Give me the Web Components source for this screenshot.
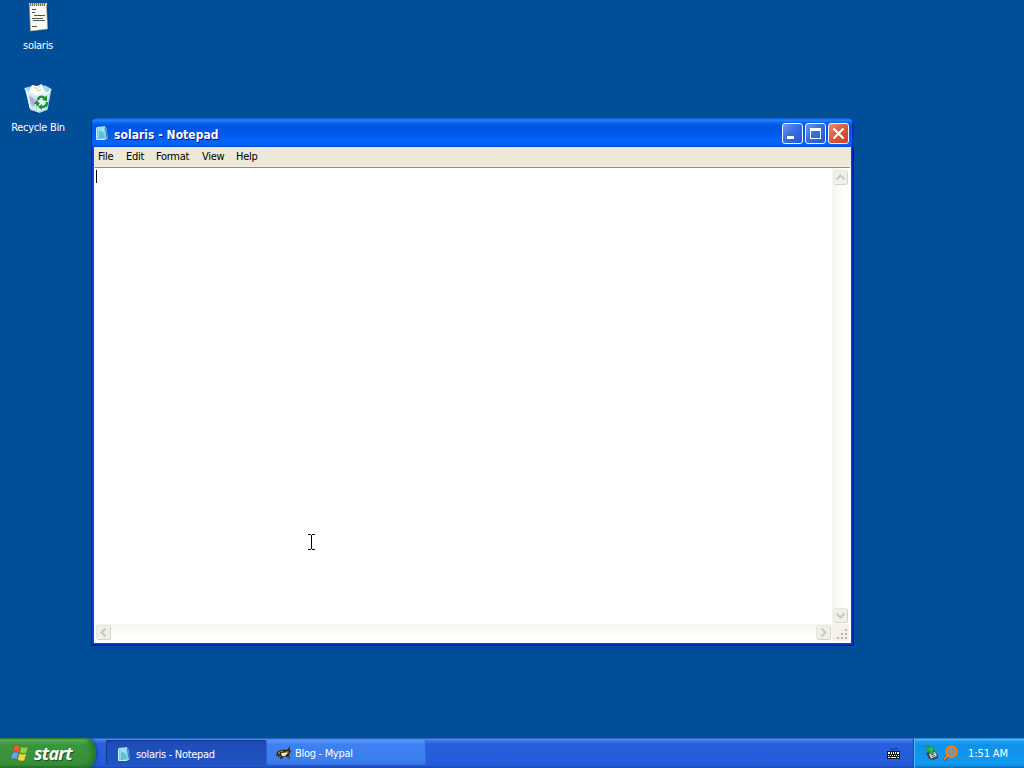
<!DOCTYPE html>
<html lang="en">
<head>
<meta charset="utf-8">
<title>solaris - Notepad</title>
<style>
  html, body {
    margin: 0;
    height: 100%;
    overflow: hidden;
  }
  body {
    background: #004e98;
    font-family: "DejaVu Sans Condensed", "DejaVu Sans", sans-serif;
    font-size: 11px;
    letter-spacing: -0.3px;
    color: #fff;
  }
</style>
</head>
<body>
<xp-desktop>
  <desktop-icon slot="icons" icon="textfile">solaris</desktop-icon>
  <desktop-icon slot="icons" icon="bin">Recycle Bin</desktop-icon>
  <xp-window slot="windows" caption="solaris - Notepad">
    <menu-bar slot="menu">
      <span style="width:28px">File</span><span style="width:30px">Edit</span><span style="width:46px">Format</span><span style="width:34px">View</span><span>Help</span>
    </menu-bar>
    <text-area></text-area>
  </xp-window>
  <xp-taskbar slot="taskbar">
    <task-button icon="notepad" active>solaris - Notepad</task-button>
    <task-button icon="mypal">Blog - Mypal</task-button>
    <span slot="clock">1:51 AM</span>
  </xp-taskbar>
</xp-desktop>

<script>
const icons = {
  textfile: `<svg width="32" height="32" viewBox="0 0 32 32">
    <path d="M24 6l3 2v22l-17 2-2-2z" fill="#002f62" opacity=".5"/>
    <path d="M7.500 5h17l1 24-17 2z" fill="#fbfbf5" stroke="#b5b4a8" stroke-width=".6"/>
    <path d="M7 3h18v2.500H7z" fill="#d9d29a"/>
    <path d="M8.500 3v3m2-3v3m2-3v3m2-3v3m2-3v3m2-3v3m2-3v3m2-3v3" stroke="#686546" stroke-width=".9"/>
    <path d="M10 9.500h4M10 12.500h3M12 15.500h11M10 18.500h11M11 20.500h12M10 26.500h5" stroke="#55564f" stroke-width="1"/>
    </svg>`,
  bin: `<svg width="32" height="32" viewBox="0 0 32 32">
    <path d="M29 8l-5 21-8 3-7-2z" fill="#00366f" opacity=".6"/>
    <path d="M2.500 6l6-1.500 15-1 6 3.500-4 21-8 3-9-3z" fill="#a9d5f2"/>
    <path d="M4 9l11 4-1 16-6-2z" fill="#c8e5f9"/><path d="M15 13l13-4-4 18-9 3z" fill="#e0f0fb"/>
    <path d="M8 6l2-3 5 1 5-2 2 6 2 2-9 3-8-3z" fill="#fff"/>
    <path d="M12 5l3 2 3-3m-4 5l5-1" fill="none" stroke="#d6ce8d"/>
    <path d="M3 6l3 5 9 3 11-3 3-4M5 10l3 16" fill="none" stroke="#f2faff" stroke-width="1.1"/>
    <path d="M7 14l4 2 3 3-2 6-3-3z" fill="#b2aed5"/>
    <g fill="none" stroke="#19952c" stroke-width="2.500"><path d="M16 18q1-4 5-3l3 2"/><path d="M25 20q0 5-5 5"/><path d="M16 24l-1-3"/></g>
    <path d="M25 13v6l-5-1zM20 22v6l-4-3zM12 22l3-4 3 4z" fill="#19952c"/>
    </svg>`,
  notepad: `<svg width="16" height="16" viewBox="0 0 16 16">
    <path d="M11 4l4.500 9-3.500 1-2-1z" fill="#15468c"/>
    <path d="M2 1.500l9-1 1.500 2 1.500 10-3 1.500-9-.5z" fill="#7bc7e3"/>
    <path d="M4 2.500l6-.5 1.500 11-7-.5z" fill="#9be3f2"/>
    <path d="M5 4l5 3 1 5-6 1z" fill="#4fa9cb" opacity=".7"/>
    <path d="M2.500 2v11.500h8M3 1.500l8-.7" fill="none" stroke="#c7edf5"/>
    <path d="M11.500 2l1.500 10" stroke="#3a82aa"/>
    </svg>`,
  mypal: `<svg width="16" height="16" viewBox="0 0 16 16">
    <path d="M1 7l3-2 3-.5 3 .5 2-1 2-3-.5 4 1.500 1-1 2-1 2 1 4-3-1-1-2-3 1-1 2H4l1-3-4 2 2-3-3 1z" fill="#28231d"/>
    <path d="M3 6l3-.5 2 .5-2 1zM9 7l3-1 1 1-2 2z" fill="#cf8736"/>
    <path d="M5 8l5-.5 1.500 1L9 11H6z" fill="#f8eabd"/>
    <path d="M2 8h2M8 9.500h2M12 12v1" stroke="#eed29c"/>
    <path d="M2 6l2-1M3 12l2-1" stroke="#a85b20"/>
    </svg>`,
  keyboard: `<svg width="14" height="14" viewBox="0 0 14 14">
    <path d="M3 2.500h1l1 1h2l1-1h2l1 1" fill="none" stroke="#16255e" stroke-width=".9"/>
    <path d="M0 5h13v8H0z" fill="#151515"/>
    <g fill="#fff"><path d="M1 6h2v2H1zM4 6h1v2H4zM6 6h1v2H6zM8 6h1v2H8zM10 6h2v2h-2zM1 9h1v1H1zM3 9h1v1H3zM5 9h1v1H5zM7 9h1v1H7zM9 9h1v1H9zM11 9h1v1h-1zM1 11h2v1H1zM4 11h5v1H4zM10 11h2v1h-2z"/></g>
    </svg>`,
  usb: `<svg width="16" height="16" viewBox="0 0 16 16">
    <path d="M2 8l3 6 4 1 5-2v-3l-4-4z" fill="#354750"/><path d="M5 9l6-2 2 4-6 2.500z" fill="#d2dadd"/>
    <path d="M7 10l3-1M8 11.500l3-1" stroke="#506672"/>
    <path d="M1 1l4 1.500L7 1l4 4-2 1v3L5 8l1-2-3-1z" fill="#2dbb43" stroke="#127c30" stroke-width=".6"/>
    </svg>`,
  search: `<svg width="17" height="17" viewBox="0 0 17 17">
    <path d="M6 10l-4 5" stroke="#69423a" stroke-width="3.300"/><path d="M6 10l-4 4.500" stroke="#ef8428" stroke-width="2"/>
    <circle cx="9.500" cy="6.500" r="5" fill="#559bc9" stroke="#e98122" stroke-width="2.600"/>
    <circle cx="9.500" cy="6.500" r="1.400" fill="#e98129"/>
    </svg>`,
  flag: `<svg width="20" height="20" viewBox="0 0 20 20">
    <g stroke="#24572a" stroke-width=".3">
    <path d="M4 3q3-2 6.500 0L9 9.500q-3-2-6.500 0z" fill="#f25a28"/>
    <path d="M11 3.500q3 2 7 0L16.500 10q-3 1.500-7-.5z" fill="#8bd34a"/>
    <path d="M2.300 10q3-2 6.500 0L7 16.500q-3-2-6.500 0z" fill="#6c9df4"/>
    <path d="M9.300 10.200q3 2 7 .3L14.500 17.500q-3.500 1.500-7-.7z" fill="#fbd33c"/></g>
    </svg>`
};

function render(element, html) {
  const template = document.createElement('template');
  template.innerHTML = html;
  const root = element.attachShadow({ mode: 'open' });
  root.appendChild(template.content.cloneNode(true));
  return root;
}

class XpDesktop extends HTMLElement {
  constructor() {
    super();
    render(this, `
      <style>
        :host { display: flex; flex-direction: column; height: 100vh; position: relative; background: #004e98; }
        .icons { flex: 1; display: flex; flex-direction: column; width: 76px; gap: 30px; }
        .pointer { position: absolute; left: 307px; top: 534px; }
      </style>
      <div class="icons"><slot name="icons"></slot></div>
      <slot name="windows"></slot>
      <slot name="taskbar"></slot>
      <svg class="pointer" width="9" height="16" shape-rendering="crispEdges"><path d="M1 .5h3m1 0h3M4.500 1v14M1 15.500h3m1 0h3" stroke="#000" fill="none"/></svg>
    `);
  }
}

class DesktopIcon extends HTMLElement {
  constructor() {
    super();
    render(this, `
      <style>
        :host { display: flex; flex-direction: column; align-items: center; height: 52px; }
        svg { display: block; flex: none; }
        .label { margin-top: 7px; line-height: 14px; white-space: nowrap; }
      </style>
      ${icons[this.getAttribute('icon')]}
      <div class="label"><slot></slot></div>
    `);
  }
}

class CaptionButton extends HTMLElement {
  constructor() {
    super();
    const marks = {
      min: '<path d="M5 13h7v3H5z" fill="#fff"/>',
      max: '<path d="M5 5h11v11H5zM6 8v7h9V8z" fill="#fff" fill-rule="evenodd"/>',
      close: '<path d="M5.500 5.500l10 10m0-10l-10 10" stroke="#fff" stroke-width="2.200"/>'
    };
    render(this, `
      <style>
        :host { display: block; box-sizing: border-box; width: 21px; height: 21px; border: 1px solid #eef4ff; border-radius: 3px;
          background: linear-gradient(135deg, #6c98ef, #3a6de4 45%, #2456d8); }
        :host([kind=close]) { background: linear-gradient(135deg, #ea9276, #dd5a38 45%, #c94421); }
        svg { display: block; margin: -1px; }
      </style>
      <svg width="21" height="21" viewBox="0 0 21 21">${marks[this.getAttribute('kind')]}</svg>
    `);
  }
}

class XpWindow extends HTMLElement {
  constructor() {
    super();
    const root = render(this, `
      <style>
        :host { position: absolute; left: 91px; top: 118px; width: 763px; height: 528px; box-sizing: border-box;
          display: flex; flex-direction: column; padding: 0 3px 3px; background: #0a3fe6; border-radius: 7px 7px 0 0; overflow: hidden;
          box-shadow: inset 1px 0 #0019cf, inset -1px -1px #001aa5, inset -2px -2px #0026c4; }
        .title { height: 29px; flex: none; box-sizing: border-box; margin: 0 -3px; padding: 2px 5px 0 3px; display: flex; align-items: center;
          background: linear-gradient(#0058cf 0, #2b86fb 7%, #0f6ff2 14%, #0058e8 24%, #0055e6 40%, #005bf2 60%, #0265fc 80%, #0262f6 90%, #004bdc 100%);
          box-shadow: inset 1px 0 #0019cf, inset -2px 0 #0031c8; }
        .caption { flex: 1; margin-left: 4px; font-size: 12px; font-weight: bold; letter-spacing: 0.03px; text-shadow: 1px 1px #0f1089; padding-top: 2px; }
        .buttons { display: flex; gap: 2px; }
        .body { flex: 1; display: flex; flex-direction: column; min-height: 0; background: #fff; }
      </style>
      <div class="title">
        ${icons.notepad}
        <div class="caption"></div>
        <div class="buttons"><caption-button kind="min"></caption-button><caption-button kind="max"></caption-button><caption-button kind="close"></caption-button></div>
      </div>
      <div class="body"><slot name="menu"></slot><slot></slot></div>
    `);
    root.querySelector('.caption').textContent = this.getAttribute('caption');
  }
}

class MenuBar extends HTMLElement {
  constructor() {
    super();
    render(this, `
      <style>
        :host { display: flex; flex: none; box-sizing: border-box; height: 20px; padding: 3px 4px 0; line-height: 14px; color: #000; background: #ece9d8; border-bottom: 1px solid #f3f0e5; }
      </style>
      <slot></slot>
    `);
  }
}

class ScrollBar extends HTMLElement {
  constructor() {
    super();
    const arrow = turn => `<svg width="17" height="17" viewBox="0 0 17 17"><rect x="1.500" y="1.500" width="14" height="14" rx="2" fill="#f0efe9" stroke="#e6e5de"/><path d="M3 15.500h11.500l1-1V3" fill="none" stroke="#d4d3cb"/><path d="M4.500 10.500l4-4 4 4" transform="rotate(${turn} 8.500 8.500)" fill="none" stroke="#c9c8bf" stroke-width="2"/></svg>`;
    const vertical = this.hasAttribute('vertical');
    render(this, `
      <style>
        :host { display: flex; justify-content: space-between; background: linear-gradient(#f5f4ef, #fefefb 70%); }
        :host([vertical]) { flex-direction: column; padding-top: 1px; background: linear-gradient(90deg, #f5f4ef, #fefefb 70%); }
        svg { display: block; flex: none; }
      </style>
      ${arrow(vertical ? 0 : -90)}${arrow(vertical ? 180 : 90)}
    `);
  }
}

class TextArea extends HTMLElement {
  constructor() {
    super();
    render(this, `
      <style>
        :host { display: grid; grid-template: 1fr 17px / 1fr 17px; flex: 1; box-sizing: border-box; border: 1px solid #fff; border-width: 1px 2px 2px 1px; border-top-color: #8d8c84; }
        .paper { background: #fff; padding: 2px 1px; }
        .caret { width: 1px; height: 13px; background: #000; }
        .grip { background: #f3f1e8; }
        svg { display: block; }
      </style>
      <div class="paper"><div class="caret"></div></div>
      <scroll-bar vertical></scroll-bar>
      <scroll-bar></scroll-bar>
      <div class="grip"><svg width="17" height="17"><path d="M13 5h2v2h-2zM9 9h2v2H9zm4 0h2v2h-2zM5 13h2v2H5zm4 0h2v2H9zm4 0h2v2h-2z" fill="#b8b4a2"/></svg></div>
    `);
  }
}

class TaskButton extends HTMLElement {
  constructor() {
    super();
    render(this, `
      <style>
        :host { display: flex; align-items: center; box-sizing: border-box; width: 159px; height: 25px; padding: 1px 10px 0 9px; gap: 3px; white-space: nowrap;
          background: linear-gradient(#5a96fa, #3d82f2 18%, #3b7eee 80%, #3472e5); border-radius: 2px; box-shadow: inset -1px 0 #3169d3; }
        :host([active]) { width: 160px; background: linear-gradient(#1a47a8, #1e4eb9 20%, #2054c1); padding: 4px 10px 0; gap: 4px; box-shadow: inset 1px 1px #143a91; }
        svg { flex: none; }
      </style>
      ${icons[this.getAttribute('icon')]}<span><slot></slot></span>
    `);
  }
}

class XpTaskbar extends HTMLElement {
  constructor() {
    super();
    render(this, `
      <style>
        :host { display: flex; height: 30px; flex: none; background: linear-gradient(#1f4fba 0, #5288ed 5%, #3b74e5 10%, #285fdc 20%, #245bda 80%, #2358d2 92%, #1b46a8); }
        .start { width: 96px; box-sizing: border-box; display: flex; align-items: center; padding: 0 0 1px 10px; gap: 4px; border-radius: 0 9px 9px 0 / 0 15px 15px 0;
          background: linear-gradient(#347d34 0, #6bb86b 7%, #48a348 14%, #3a963c 24%, #389039 80%, #368c36 90%, #27672a);
          box-shadow: inset -4px 0 5px #247828, 1px 0 3px #123f8d;
          font: italic bold 18px "Open Sans", sans-serif; letter-spacing: -0.75px; text-shadow: 1px 1px 1px #204922; }
        .tasks { flex: 1; display: flex; gap: 1px; padding: 2px 0 0 10px; }
        .keys { display: flex; align-items: center; padding: 0 12px 0 0; }
        .tray { width: 111px; box-sizing: border-box; display: flex; align-items: center; padding-left: 10px; border-left: 1px solid #134b9b;
          background: linear-gradient(#0c74cb 0, #50baf7 5%, #189bef 12%, #1290e9 25%, #119af0 82%, #118ee1 92%, #0c6db9); box-shadow: inset 1px 0 #4cc0fa; }
        .clock { margin-left: 9px; letter-spacing: -0.1px; }
      </style>
      <div class="start">${icons.flag}<span>start</span></div>
      <div class="tasks"><slot></slot></div>
      <div class="keys">${icons.keyboard}</div>
      <div class="tray">${icons.usb}<span style="width:2px"></span>${icons.search}<div class="clock"><slot name="clock"></slot></div></div>
    `);
  }
}

customElements.define('xp-desktop', XpDesktop);
customElements.define('desktop-icon', DesktopIcon);
customElements.define('caption-button', CaptionButton);
customElements.define('xp-window', XpWindow);
customElements.define('menu-bar', MenuBar);
customElements.define('scroll-bar', ScrollBar);
customElements.define('text-area', TextArea);
customElements.define('task-button', TaskButton);
customElements.define('xp-taskbar', XpTaskbar);
</script>
</body>
</html>
